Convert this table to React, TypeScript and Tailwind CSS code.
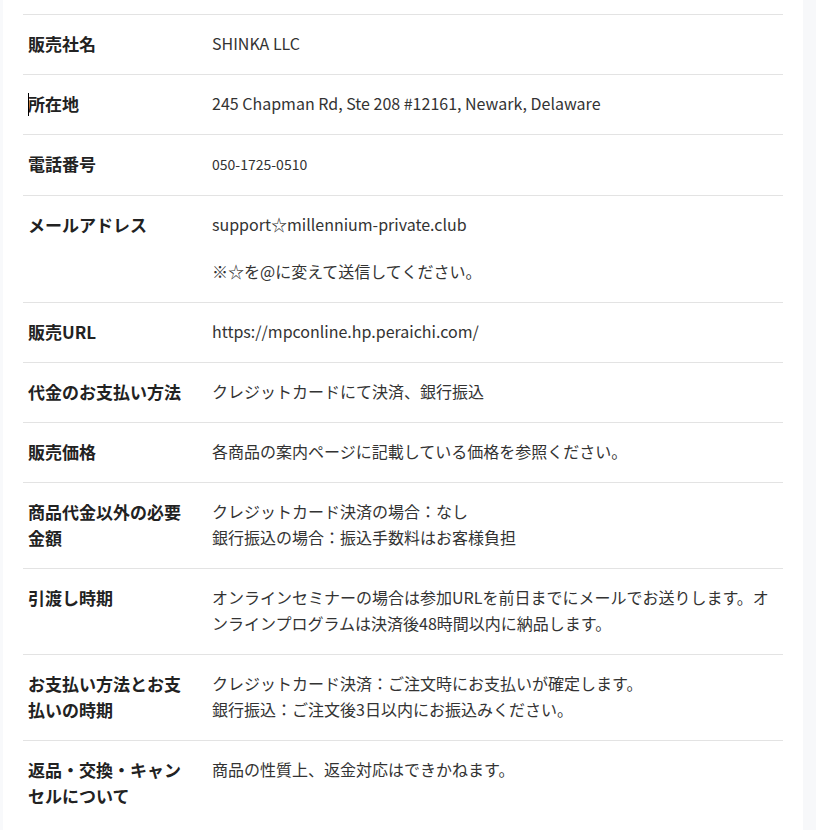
const ROWS: { label: string; value: React.ReactNode }[] = [
  { label: "販売社名", value: "SHINKA LLC" },
  { label: "所在地", value: "245 Chapman Rd, Ste 208 #12161, Newark, Delaware" },
  { label: "電話番号", value: <span className="text-[14px]">050-1725-0510</span> },
  {
    label: "メールアドレス",
    value: (
      <>
        <p className="mb-[21px]">support☆millennium-private.club</p>
        <p>※☆を@に変えて送信してください。</p>
      </>
    ),
  },
  { label: "販売URL", value: "https://mpconline.hp.peraichi.com/" },
  { label: "代金のお支払い方法", value: "クレジットカードにて決済、銀行振込" },
  { label: "販売価格", value: "各商品の案内ページに記載している価格を参照ください。" },
  {
    label: "商品代金以外の必要金額",
    value: (
      <>
        クレジットカード決済の場合：なし
        <br />
        銀行振込の場合：振込手数料はお客様負担
      </>
    ),
  },
  {
    label: "引渡し時期",
    value:
      "オンラインセミナーの場合は参加URLを前日までにメールでお送りします。オンラインプログラムは決済後48時間以内に納品します。",
  },
  {
    label: "お支払い方法とお支払いの時期",
    value: (
      <>
        クレジットカード決済：ご注文時にお支払いが確定します。
        <br />
        銀行振込：ご注文後3日以内にお振込みください。
      </>
    ),
  },
  { label: "返品・交換・キャンセルについて", value: "商品の性質上、返金対応はできかねます。" },
];

export default function App() {
  return (
    <div
      className="flex h-[830px] overflow-hidden bg-white text-[16px] leading-[26px] text-[#333]"
      style={{ fontFamily: '"Noto Sans CJK JP", "Noto Sans", sans-serif' }}
    >
      <div className="w-[3px] shrink-0 bg-[#f8f9fb]" />
      <div className="w-[800px] shrink-0 pl-[20px] pr-[20px] pt-[14px]">
        <table className="w-full border-collapse">
          <tbody>
            {ROWS.map((row, i) => (
              <tr key={row.label} className="border-t border-[#e3e3e3] align-top">
                <th className="relative w-[184px] pl-[5px] pr-[20px] pt-[16px] pb-[17px] text-left text-[17px] font-bold text-[#222]">
                  {i === 1 && (
                    <span className="absolute left-[5px] top-[18px] h-[23px] w-px bg-black" />
                  )}
                  {row.label}
                </th>
                <td className="pl-[5px] pr-[5px] pt-[15px] pb-[18px]">{row.value}</td>
              </tr>
            ))}
          </tbody>
        </table>
      </div>
      <div className="flex-1 bg-[#f7f8fa]" />
    </div>
  );
}
